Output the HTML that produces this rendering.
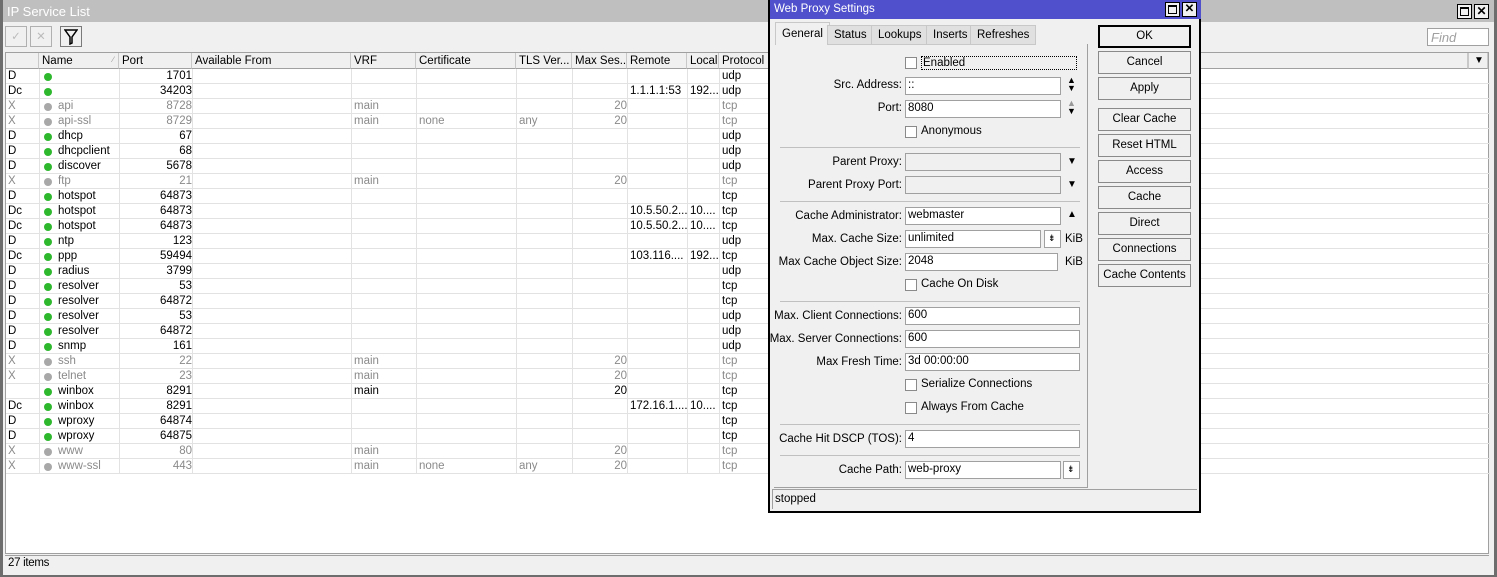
<!DOCTYPE html>
<html><head><meta charset="utf-8"><style>
*{box-sizing:border-box;margin:0;padding:0}
body{width:1497px;height:577px;overflow:hidden;background:#f0f0f0;font:11.5px "Liberation Sans",sans-serif;color:#000;position:relative}
.a{position:absolute}
#outer{left:0;top:0;width:1497px;height:577px;border-left:3px solid #6d6d6d;border-right:3px solid #6d6d6d;border-bottom:2px solid #6d6d6d;background:#f0f0f0}
#otitle{left:0;top:0;width:1491px;height:22px;background:#bfbfbf;color:#fff;font-size:13px;padding:4px 0 0 4px}
.wb{width:15px;height:15px;border:1px solid #000;background:#f0f0f0}
#grid{left:2px;top:52px;width:1484px;height:502px;background:#fff;border:1px solid #a0a0a0}
.hd{top:0;height:16px;background:#f0f0f0;border-right:1px solid #c8c8c8;border-bottom:1px solid #a0a0a0;padding:2px 0 0 3px;white-space:nowrap;overflow:hidden}
.r{position:absolute;left:0;width:1484px;height:15px;border-bottom:1px solid #e2e2e2}
.r span{position:absolute;top:1px;white-space:nowrap}
.r .c0{left:2px}.r .c1{left:52px}.r .c2{left:116px;width:70px;text-align:right}.r .c4{left:348px}.r .c5{left:413px}.r .c6{left:513px}.r .c7{left:569px;width:52px;text-align:right}.r .c8{left:624px}.r .c9{left:684px}.r .c10{left:716px}
.g{color:#8a8a8a}
.dot{position:absolute;left:38px;top:4px;width:8px;height:8px;border-radius:50%;background:#2eb82e}
.g .dot{background:#a8a8a8}
.vl{position:absolute;top:16px;width:1px;height:405px;background:#e2e2e2}
#dlg{left:768px;top:0;width:433px;height:513px;background:#f0f0f0;border:2px solid #000;border-top:none}
#dt{left:0;top:0;width:431px;height:19px;background:#5050cc;color:#fff;padding:3px 0 0 4px}
.tab{top:25px;height:20px;border:1px solid #c8c8c8;background:#e0e0e0;padding:3px 6px 0}
#panel{left:4px;top:44px;width:314px;height:444px;border:1px solid #a0a0a0;border-top:none;border-left:none}
.lb{position:absolute;right:185px;text-align:right;white-space:nowrap}
.in{position:absolute;left:131px;height:18px;border:1px solid #a0a0a0;background:#fff;padding:1px 0 0 2px}
.dis{background:#f0f0f0}
.cb{position:absolute;left:131px;width:12px;height:12px;border:1px solid #8a8a8a;background:#fff}
.ct{position:absolute;left:147px}
.sep{position:absolute;left:6px;width:300px;height:1px;background:#c0c0c0}
.btn{position:absolute;left:328px;width:93px;height:23px;border:1px solid #8a8a8a;background:#f0f0f0;text-align:center;padding-top:4px}
.arr{position:absolute;left:293px;font-size:10px}
</style></head><body>
<div id="outer" class="a">
<div id="otitle" class="a">IP Service List</div>
<div class="a wb" style="left:1454px;top:4px"><div style="position:absolute;left:2px;top:2px;width:9px;height:9px;border:1px solid #000;border-top-width:2px"></div></div>
<div class="a wb" style="left:1471px;top:4px;font-size:12px;font-weight:bold;text-align:center;line-height:12px">✕</div>
<div class="a" style="left:2px;top:26px;width:22px;height:21px;border:1px solid #b0b0b0;color:#bbb;text-align:center;padding-top:2px">✓</div>
<div class="a" style="left:27px;top:26px;width:22px;height:21px;border:1px solid #b0b0b0;color:#bbb;text-align:center;padding-top:2px">✕</div>
<div class="a" style="left:57px;top:26px;width:22px;height:21px;border:1px solid #7a7a7a;text-align:center"><svg width="14" height="16" viewBox="0 0 14 16" style="margin-top:2px"><path d="M1 1H13L8 8V14L6 15V8Z" fill="none" stroke="#000" stroke-width="1.5"/></svg></div>
<div class="a" style="left:1424px;top:28px;width:62px;height:18px;border:1px solid #a0a0a0;background:#fff;color:#a0a0a0;font-style:italic;padding:1px 0 0 3px;font-size:13px">Find</div>
<div id="grid" class="a">
<div class="a hd" style="left:0;width:33px"></div>
<div class="a hd" style="left:33px;width:80px">Name<span style="position:absolute;right:4px;color:#999;font-size:8px">∕</span></div>
<div class="a hd" style="left:113px;width:73px">Port</div>
<div class="a hd" style="left:186px;width:159px">Available From</div>
<div class="a hd" style="left:345px;width:65px">VRF</div>
<div class="a hd" style="left:410px;width:100px">Certificate</div>
<div class="a hd" style="left:510px;width:56px">TLS Ver...</div>
<div class="a hd" style="left:566px;width:55px">Max Ses...</div>
<div class="a hd" style="left:621px;width:60px">Remote</div>
<div class="a hd" style="left:681px;width:32px">Local</div>
<div class="a hd" style="left:713px;width:749px">Protocol</div>
<div class="a hd" style="left:1462px;width:20px;border-left:1px solid #c8c8c8;font-size:10px;padding-left:5px">▼</div>
<div class="vl" style="left:33px"></div><div class="vl" style="left:113px"></div><div class="vl" style="left:186px"></div><div class="vl" style="left:345px"></div><div class="vl" style="left:410px"></div><div class="vl" style="left:510px"></div><div class="vl" style="left:566px"></div><div class="vl" style="left:621px"></div><div class="vl" style="left:681px"></div><div class="vl" style="left:713px"></div>
<div style="position:absolute;left:0;top:16px">
<div class="r" style="top:0"><span class="c0">D</span><i class="dot"></i><span class="c2">1701</span><span class="c10">udp</span></div>
<div class="r" style="top:15px"><span class="c0">Dc</span><i class="dot"></i><span class="c2">34203</span><span class="c8">1.1.1.1:53</span><span class="c9">192...</span><span class="c10">udp</span></div>
<div class="r g" style="top:30px"><span class="c0">X</span><i class="dot"></i><span class="c1">api</span><span class="c2">8728</span><span class="c4">main</span><span class="c7">20</span><span class="c10">tcp</span></div>
<div class="r g" style="top:45px"><span class="c0">X</span><i class="dot"></i><span class="c1">api-ssl</span><span class="c2">8729</span><span class="c4">main</span><span class="c5">none</span><span class="c6">any</span><span class="c7">20</span><span class="c10">tcp</span></div>
<div class="r" style="top:60px"><span class="c0">D</span><i class="dot"></i><span class="c1">dhcp</span><span class="c2">67</span><span class="c10">udp</span></div>
<div class="r" style="top:75px"><span class="c0">D</span><i class="dot"></i><span class="c1">dhcpclient</span><span class="c2">68</span><span class="c10">udp</span></div>
<div class="r" style="top:90px"><span class="c0">D</span><i class="dot"></i><span class="c1">discover</span><span class="c2">5678</span><span class="c10">udp</span></div>
<div class="r g" style="top:105px"><span class="c0">X</span><i class="dot"></i><span class="c1">ftp</span><span class="c2">21</span><span class="c4">main</span><span class="c7">20</span><span class="c10">tcp</span></div>
<div class="r" style="top:120px"><span class="c0">D</span><i class="dot"></i><span class="c1">hotspot</span><span class="c2">64873</span><span class="c10">tcp</span></div>
<div class="r" style="top:135px"><span class="c0">Dc</span><i class="dot"></i><span class="c1">hotspot</span><span class="c2">64873</span><span class="c8">10.5.50.2...</span><span class="c9">10....</span><span class="c10">tcp</span></div>
<div class="r" style="top:150px"><span class="c0">Dc</span><i class="dot"></i><span class="c1">hotspot</span><span class="c2">64873</span><span class="c8">10.5.50.2...</span><span class="c9">10....</span><span class="c10">tcp</span></div>
<div class="r" style="top:165px"><span class="c0">D</span><i class="dot"></i><span class="c1">ntp</span><span class="c2">123</span><span class="c10">udp</span></div>
<div class="r" style="top:180px"><span class="c0">Dc</span><i class="dot"></i><span class="c1">ppp</span><span class="c2">59494</span><span class="c8">103.116....</span><span class="c9">192...</span><span class="c10">tcp</span></div>
<div class="r" style="top:195px"><span class="c0">D</span><i class="dot"></i><span class="c1">radius</span><span class="c2">3799</span><span class="c10">udp</span></div>
<div class="r" style="top:210px"><span class="c0">D</span><i class="dot"></i><span class="c1">resolver</span><span class="c2">53</span><span class="c10">tcp</span></div>
<div class="r" style="top:225px"><span class="c0">D</span><i class="dot"></i><span class="c1">resolver</span><span class="c2">64872</span><span class="c10">tcp</span></div>
<div class="r" style="top:240px"><span class="c0">D</span><i class="dot"></i><span class="c1">resolver</span><span class="c2">53</span><span class="c10">udp</span></div>
<div class="r" style="top:255px"><span class="c0">D</span><i class="dot"></i><span class="c1">resolver</span><span class="c2">64872</span><span class="c10">udp</span></div>
<div class="r" style="top:270px"><span class="c0">D</span><i class="dot"></i><span class="c1">snmp</span><span class="c2">161</span><span class="c10">udp</span></div>
<div class="r g" style="top:285px"><span class="c0">X</span><i class="dot"></i><span class="c1">ssh</span><span class="c2">22</span><span class="c4">main</span><span class="c7">20</span><span class="c10">tcp</span></div>
<div class="r g" style="top:300px"><span class="c0">X</span><i class="dot"></i><span class="c1">telnet</span><span class="c2">23</span><span class="c4">main</span><span class="c7">20</span><span class="c10">tcp</span></div>
<div class="r" style="top:315px"><i class="dot"></i><span class="c1">winbox</span><span class="c2">8291</span><span class="c4">main</span><span class="c7">20</span><span class="c10">tcp</span></div>
<div class="r" style="top:330px"><span class="c0">Dc</span><i class="dot"></i><span class="c1">winbox</span><span class="c2">8291</span><span class="c8">172.16.1....</span><span class="c9">10....</span><span class="c10">tcp</span></div>
<div class="r" style="top:345px"><span class="c0">D</span><i class="dot"></i><span class="c1">wproxy</span><span class="c2">64874</span><span class="c10">tcp</span></div>
<div class="r" style="top:360px"><span class="c0">D</span><i class="dot"></i><span class="c1">wproxy</span><span class="c2">64875</span><span class="c10">tcp</span></div>
<div class="r g" style="top:375px"><span class="c0">X</span><i class="dot"></i><span class="c1">www</span><span class="c2">80</span><span class="c4">main</span><span class="c7">20</span><span class="c10">tcp</span></div>
<div class="r g" style="top:390px"><span class="c0">X</span><i class="dot"></i><span class="c1">www-ssl</span><span class="c2">443</span><span class="c4">main</span><span class="c5">none</span><span class="c6">any</span><span class="c7">20</span><span class="c10">tcp</span></div>
</div>
</div>
<div class="a" style="left:2px;top:555px;width:1484px;height:17px;border-top:1px solid #a0a0a0;padding:1px 0 0 3px;letter-spacing:-0.3px">27 items</div>
</div>

<div id="dlg" class="a">
<div id="dt" class="a">Web Proxy Settings</div>
<div class="a wb" style="left:395px;top:2px"><div style="position:absolute;left:2px;top:2px;width:9px;height:9px;border:1px solid #000;border-top-width:2px"></div></div>
<div class="a wb" style="left:412px;top:2px;font-weight:bold;text-align:center;line-height:12px">✕</div>
<div class="a tab" style="left:5px;top:22px;height:23px;background:#f0f0f0;border-bottom:none;padding-top:5px">General</div>
<div class="a tab" style="left:57px">Status</div>
<div class="a tab" style="left:101px">Lookups</div>
<div class="a tab" style="left:156px">Inserts</div>
<div class="a tab" style="left:200px">Refreshes</div>
<div id="panel" class="a">
<div class="cb" style="top:13px"></div><div class="ct" style="top:12px;border:1px dotted #000;width:156px;padding-left:1px">Enabled</div>
<div class="lb" style="top:35px">Src. Address:</div><div class="in" style="top:33px;width:156px">::</div><div class="arr" style="top:32px;font-size:9px;line-height:8px">▲<br>▼</div>
<div class="lb" style="top:58px">Port:</div><div class="in" style="top:56px;width:156px">8080</div><div class="arr" style="top:55px;font-size:9px;line-height:8px"><span style="color:#999">▲</span><br>▼</div>
<div class="cb" style="top:82px"></div><div class="ct" style="top:81px">Anonymous</div>
<div class="sep" style="top:103px"></div>
<div class="lb" style="top:112px">Parent Proxy:</div><div class="in dis" style="top:109px;width:156px"></div><div class="arr" style="top:112px">▼</div>
<div class="lb" style="top:135px">Parent Proxy Port:</div><div class="in dis" style="top:132px;width:156px"></div><div class="arr" style="top:135px">▼</div>
<div class="sep" style="top:157px"></div>
<div class="lb" style="top:166px">Cache Administrator:</div><div class="in" style="top:163px;width:156px">webmaster</div><div class="arr" style="top:165px">▲</div>
<div class="lb" style="top:189px">Max. Cache Size:</div><div class="in" style="top:186px;width:136px">unlimited</div><div class="in" style="left:270px;top:186px;width:17px;font-size:9px;padding:2px 0 0 3px">⇟</div><div class="a" style="left:291px;top:189px">KiB</div>
<div class="lb" style="top:212px">Max Cache Object Size:</div><div class="in" style="top:209px;width:153px">2048</div><div class="a" style="left:291px;top:212px">KiB</div>
<div class="cb" style="top:235px"></div><div class="ct" style="top:234px">Cache On Disk</div>
<div class="sep" style="top:257px"></div>
<div class="lb" style="top:266px">Max. Client Connections:</div><div class="in" style="top:263px;width:175px">600</div>
<div class="lb" style="top:289px">Max. Server Connections:</div><div class="in" style="top:286px;width:175px">600</div>
<div class="lb" style="top:312px">Max Fresh Time:</div><div class="in" style="top:309px;width:175px">3d 00:00:00</div>
<div class="cb" style="top:335px"></div><div class="ct" style="top:334px">Serialize Connections</div>
<div class="cb" style="top:358px"></div><div class="ct" style="top:357px">Always From Cache</div>
<div class="sep" style="top:380px"></div>
<div class="lb" style="top:389px">Cache Hit DSCP (TOS):</div><div class="in" style="top:386px;width:175px">4</div>
<div class="sep" style="top:411px"></div>
<div class="lb" style="top:420px">Cache Path:</div><div class="in" style="top:417px;width:156px">web-proxy</div><div class="in" style="left:289px;top:417px;width:17px;font-size:9px;padding:2px 0 0 3px">⇟</div>
</div>
<div class="btn" style="top:25px;border:2px solid #000;padding-top:3px">OK</div>
<div class="btn" style="top:51px">Cancel</div>
<div class="btn" style="top:77px">Apply</div>
<div class="btn" style="top:108px">Clear Cache</div>
<div class="btn" style="top:134px">Reset HTML</div>
<div class="btn" style="top:160px">Access</div>
<div class="btn" style="top:186px">Cache</div>
<div class="btn" style="top:212px">Direct</div>
<div class="btn" style="top:238px">Connections</div>
<div class="btn" style="top:264px">Cache Contents</div>
<div class="a" style="left:2px;top:489px;width:425px;height:20px;border:1px solid #a0a0a0;border-right:none;border-bottom:none;padding:3px 0 0 2px">stopped</div>
</div>
</body></html>
